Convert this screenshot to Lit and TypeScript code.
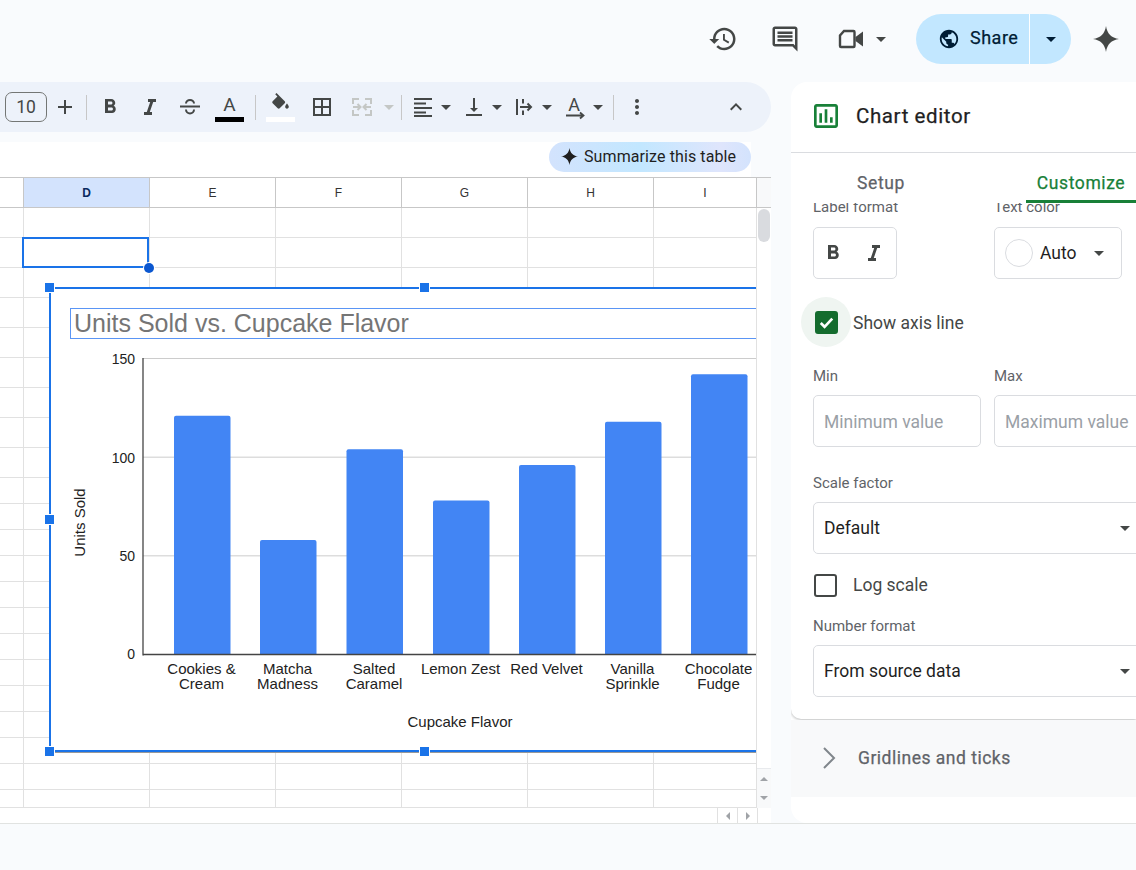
import {LitElement, css, html, svg} from 'lit';
import {customElement} from 'lit/decorators.js';

const P = {
  history: 'M13 3c-4.97 0-9 4.03-9 9H1l3.89 3.89.07.14L9 12H6c0-3.87 3.13-7 7-7s7 3.13 7 7-3.13 7-7 7c-1.93 0-3.68-.79-4.94-2.06l-1.42 1.42C8.27 19.99 10.51 21 13 21c4.97 0 9-4.03 9-9s-4.03-9-9-9zm-1 5v5l4.25 2.52.77-1.28-3.52-2.09V8z',
  comment: 'M21.99 4c0-1.1-.89-2-1.99-2H4c-1.1 0-2 .9-2 2v12c0 1.1.9 2 2 2h14l4 4-.01-18zM20 4v13.17L18.83 16H4V4h16zM6 12h12v2H6zm0-3h12v2H6zm0-3h12v2H6z',
  globe: 'M12 2C6.48 2 2 6.48 2 12s4.48 10 10 10 10-4.48 10-10S17.52 2 12 2zm-1 17.93c-3.95-.49-7-3.85-7-7.93 0-.62.08-1.21.21-1.79L9 15v1c0 1.1.9 2 2 2v1.93zm6.9-2.54c-.26-.81-1-1.39-1.9-1.39h-1v-3c0-.55-.45-1-1-1H8v-2h2c.55 0 1-.45 1-1V7h2c1.1 0 2-.9 2-2v-.41c2.93 1.19 5 4.06 5 7.41 0 2.08-.8 3.97-2.1 5.39z',
  spark: 'M12 0C13 7 17 11 24 12C17 13 13 17 12 24C11 17 7 13 0 12C7 11 11 7 12 0z',
  plus: 'M19 13h-6v6h-2v-6H5v-2h6V5h2v6h6v2z',
  bold: 'M15.6 10.79c.97-.67 1.65-1.77 1.65-2.79 0-2.26-1.75-4-4-4H7v14h7.04c2.09 0 3.71-1.7 3.71-3.79 0-1.52-.86-2.82-2.15-3.42zM10 6.5h3c.83 0 1.5.67 1.5 1.5s-.67 1.5-1.5 1.5h-3v-3zm3.5 9H10v-3h3.5c.83 0 1.5.67 1.5 1.5s-.67 1.5-1.5 1.5z',
  italic: 'M10 4v3h2.21l-3.42 10H6v3h8v-3h-2.21l3.42-10H18V4z',
  fill: 'M16.56 8.94L7.62 0 6.21 1.41l2.38 2.38-5.15 5.15c-.59.59-.59 1.54 0 2.12l5.5 5.5c.29.29.68.44 1.06.44s.77-.15 1.06-.44l5.5-5.5c.59-.58.59-1.53 0-2.12zM19 11.5s-2 2.17-2 3.5c0 1.1.9 2 2 2s2-.9 2-2c0-1.33-2-3.5-2-3.5z',
  borders: 'M3 3v18h18V3H3zm8 16H5v-6h6v6zm0-8H5V5h6v6zm8 8h-6v-6h6v6zm0-8h-6V5h6v6z',
  align: 'M3 3h18v2H3zM3 7.5h12v2H3zM3 12h18v2H3zM3 16.500h12v2H3zM3 20h18v2H3z',
  valign: 'M16 13h-3V3h-2v10H8l4 4 4-4zM4 19v2h16v-2H4z',
  more: 'M12 8c1.1 0 2-.9 2-2s-.9-2-2-2-2 .9-2 2 .9 2 2 2zm0 2c-1.1 0-2 .9-2 2s.9 2 2 2 2-.9 2-2-.9-2-2-2zm0 6c-1.1 0-2 .9-2 2s.9 2 2 2 2-.9 2-2-.9-2-2-2z',
  less: 'M12 8l-6 6 1.41 1.41L12 10.83l4.59 4.58L18 14z',
  chart: 'M19 3H5c-1.1 0-2 .9-2 2v14c0 1.1.9 2 2 2h14c1.1 0 2-.9 2-2V5c0-1.1-.9-2-2-2zm0 16H5V5h14v14zM7 10h2v7H7zm4-3h2v10h-2zm4 6h2v4h-2z',
};

const icon = (d: string, cls = '') =>
  html`<svg class="ic ${cls}" viewBox="0 0 24 24"><path d=${d}></path></svg>`;

const BARS = [
  {v: 121, x: 174, l: ['Cookies &', 'Cream']},
  {v: 58, x: 260, l: ['Matcha', 'Madness']},
  {v: 104, x: 346.500, l: ['Salted', 'Caramel']},
  {v: 78, x: 433, l: ['Lemon Zest']},
  {v: 96, x: 519, l: ['Red Velvet']},
  {v: 118, x: 605, l: ['Vanilla', 'Sprinkle']},
  {v: 142, x: 691, l: ['Chocolate', 'Fudge']},
];
const BASE = 654.5;
const UNIT = 296 / 150;

const COLS = ['D', 'E', 'F', 'G', 'H', 'I'];
// 9 tall rows, 12 short ones, then the cut-off last row
const ROWS = [...Array(9).fill(30), ...Array(12).fill(26), 18];

@customElement('app-root')
export class AppRoot extends LitElement {
  static styles = css`
    :host {
      display: block;
      width: 1136px;
      height: 870px;
      overflow: hidden;
      background: #f9fbfd;
      font-family: Roboto, "Liberation Sans", sans-serif;
      color: #1f1f1f;
    }
    .ic { display: block; width: 24px; height: 24px; fill: #444746; flex: none; }
    .caret {
      display: block;
      flex: none;
      width: 0;
      height: 0;
      border-left: 5px solid transparent;
      border-right: 5px solid transparent;
      border-top: 5px solid #444746;
    }

    /* top bar */
    .top {
      height: 82px;
      box-sizing: border-box;
      padding: 0 10px 4px 0;
      display: flex;
      align-items: center;
      justify-content: flex-end;
    }
    .tbtn { width: 40px; height: 40px; display: flex; align-items: center; justify-content: center; }
    .tbtn .ic { width: 30px; height: 30px; }
    .comment { margin-left: 22px; }
    .video { margin-left: 26px; }
    .video svg { width: 26px; height: 20px; fill: none; }
    .vcaret { width: 20px; display: flex; justify-content: center; }
    .share {
      margin-left: 25px;
      height: 50px;
      width: 155px;
      border-radius: 25px;
      overflow: hidden;
      background: #c2e7ff;
      display: flex;
      color: #001d35;
    }
    .share-main {
      width: 114px;
      display: flex;
      align-items: center;
      padding-left: 22px;
      box-sizing: border-box;
      gap: 10px;
      font-size: 18px;
      letter-spacing: .5px;
      -webkit-text-stroke: .25px #001d35;
      border-right: 1px solid #fff;
    }
    .share-main .ic { width: 22px; height: 22px; fill: #001d35; }
    .share-main span { margin-top: -3px; }
    .share-drop { flex: 1; display: flex; align-items: center; justify-content: center; }
    .share-drop .caret { border-top-color: #001d35; }
    .gem { margin-left: 15px; }
    .gem .ic { width: 26px; height: 26px; }

    .main { display: flex; height: 741px; gap: 20px; }

    /* toolbar */
    .left { width: 771px; flex: none; }
    .bar {
      height: 50px;
      background: #edf2fa;
      border-radius: 0 25px 25px 0;
      display: flex;
      align-items: center;
      padding: 0 15px 0 5px;
      box-sizing: border-box;
    }
    .size {
      width: 42px;
      height: 30px;
      box-sizing: border-box;
      border: 1px solid #747775;
      border-radius: 7px;
      font-size: 17.5px;
      color: #444746;
      display: flex;
      align-items: center;
      justify-content: center;
      flex: none;
    }
    .b { width: 40px; height: 30px; display: flex; align-items: center; justify-content: center; flex: none; }
    .b svg { overflow: visible; }
    .b36 { width: 36px; }
    .b44 { width: 44px; }
    .sep { width: 1px; height: 25px; background: #c7c7c7; flex: none; margin: 0 3px; }
    .sep.s2 { margin: 0 4px 0 5px; }
    .sep.s3 { margin: 0 5px 0 3px; }
    .sep.s4 { margin: 0 5px 0 9.5px; }
    .swatch { display: flex; flex-direction: column; align-items: center; width: 29px; height: 30px; position: relative; }
    .swatch.ink { margin-left: -1px; }
    .swatch svg { width: 29px; height: 25px; }
    .swatch i { display: block; width: 29px; height: 5px; background: #000; }
    .swatch i.white { background: #fff; }
    .dd { display: flex; align-items: center; margin-left: 5.5px; flex: none; }
    .dd.first { margin-left: 0; }
    .dd .b { width: 32px; }
    .dd > .caret { margin: 0 1px 0 2px; }
    .dd > .caret.off { margin: 0 4px; border-top-color: #c4c7c5; }
    .collapse { margin-left: auto; }

    /* sheet */
    .sheet { margin-top: 10px; height: 681px; display: flex; flex-direction: column; }
    .hint {
      width: 751px;
      height: 35px;
      flex: none;
      background: #fff;
      display: flex;
      justify-content: flex-end;
      align-items: flex-start;
    }
    .pill {
      height: 30px;
      width: 202px;
      box-sizing: border-box;
      border-radius: 15px;
      background: linear-gradient(90deg, #d3e3fd 0%, #c2e7ff 45%, #dfe5fc 85%, #d3e3fd 100%);
      display: flex;
      align-items: center;
      padding: 0 0 1px 12px;
      gap: 6px;
      font-size: 16px;
      letter-spacing: .1px;
      white-space: nowrap;
    }
    .pill .ic { width: 17px; height: 17px; fill: #1f1f1f; }
    .heads {
      height: 31px;
      flex: none;
      display: grid;
      grid-template-columns: 24px repeat(5, 126px) 103px 14px;
      border-top: 1px solid #c7c7c7;
      box-sizing: border-box;
    }
    .hd {
      background: #fff;
      border-right: 1px solid #c7c7c7;
      border-bottom: 1px solid #c7c7c7;
      display: flex;
      align-items: center;
      justify-content: center;
      font: 12px "Liberation Sans", Arial, sans-serif;
      color: #333;
    }
    .hd.sel { background: #d3e3fd; color: #0a2a5e; font-weight: 700; }
    .hd.end { background: #f8f9fa; border-right: 0; }
    .body { height: 600px; flex: none; display: flex; }
    .view { width: 757px; position: relative; background: #fff; overflow: hidden; }
    .cells { display: grid; grid-template-columns: 24px repeat(5, 126px) 103px; }
    .cell { box-sizing: border-box; border-right: 1px solid #e1e1e1; border-bottom: 1px solid #e1e1e1; }
    .vbar { width: 14px; background: #fff; position: relative; display: flex; flex-direction: column; }
    .thumb { position: absolute; left: 1px; top: 1px; width: 12px; height: 33px; border-radius: 6px; background: #d9dbdf; }
    .arrows {
      margin-top: auto;
      height: 40px;
      background: #f8f9fa;
      border-top: 1px solid #e8eaed;
      box-sizing: border-box;
      display: flex;
      flex-direction: column;
      align-items: center;
      justify-content: space-around;
    }
    .up, .down { width: 0; height: 0; border-left: 4px solid transparent; border-right: 4px solid transparent; }
    .up { border-bottom: 4px solid #a0a3a7; }
    .down { border-top: 4px solid #a0a3a7; }
    .hbar { height: 15px; flex: none; width: 771px; background: #fff; display: flex; justify-content: flex-end; }
    .hb { width: 20px; border-left: 1px solid #e1e1e1; display: flex; align-items: center; justify-content: center; box-sizing: border-box; }
    .hb:last-child { width: 14px; }
    .lt, .rt { width: 0; height: 0; border-top: 4px solid transparent; border-bottom: 4px solid transparent; }
    .lt { border-right: 4px solid #a0a3a7; }
    .rt { border-left: 4px solid #a0a3a7; }

    /* selected cell and chart, both lying over the grid */
    .cursor {
      position: absolute;
      left: 22px;
      top: 29px;
      width: 127px;
      height: 31px;
      box-sizing: border-box;
      border: 2px solid #1a73e8;
    }
    .cursor::after {
      content: "";
      position: absolute;
      right: -7px;
      bottom: -7px;
      width: 10px;
      height: 10px;
      border-radius: 50%;
      background: #0b57d0;
      box-shadow: 0 0 0 1px #fff;
    }
    .clip { position: absolute; left: 0; top: 0; width: 756px; height: 600px; overflow: hidden; }
    .chart {
      position: absolute;
      left: 49px;
      top: 79px;
      width: 750px;
      height: 465px;
      box-sizing: border-box;
      background: #fff;
      border: 2px solid #1a73e8;
      box-shadow: 0 1px 0 #999;
    }
    .chart svg { position: absolute; left: -2px; top: -2px; }
    .chart text { font-family: "Liberation Sans", Arial, sans-serif; font-size: 15px; fill: #222; }
    .chart text.tick-label { font-size: 14px; }
    .title {
      position: absolute;
      left: 19px;
      top: 19px;
      width: 740px;
      height: 31px;
      box-sizing: border-box;
      border: 1px solid #5a95f5;
      padding-left: 3px;
      font: 25px/28px "Liberation Sans", Arial, sans-serif;
      color: #757575;
      white-space: nowrap;
    }
    .h {
      position: absolute;
      width: 9px;
      height: 9px;
      background: #1a73e8;
      box-shadow: 0 0 0 1px #fff;
    }
    .h.tl { left: -6px; top: -6px; }
    .h.tm { left: 369px; top: -6px; }
    .h.ml { left: -6px; top: 226px; }
    .h.bl { left: -6px; top: 458px; }
    .h.bm { left: 369px; top: 458px; }

    /* chart editor */
    .panel {
      width: 345px;
      height: 741px;
      background: #fff;
      border-radius: 16px 0 0 16px;
      overflow: hidden;
      flex: none;
      display: flex;
      flex-direction: column;
    }
    .phead {
      height: 71px;
      flex: none;
      box-sizing: border-box;
      border-bottom: 1px solid #dadce0;
      display: flex;
      align-items: center;
      padding: 0 0 2px 19px;
      gap: 14px;
      font-size: 20.5px;
      letter-spacing: .6px;
      -webkit-text-stroke: .25px #1f1f1f;
    }
    .phead .ic { width: 32px; height: 32px; fill: #188038; }
    .tabs { height: 50px; flex: none; display: flex; padding-left: 35px; gap: 90px; }
    .tab {
      width: 110px;
      box-sizing: border-box;
      display: flex;
      align-items: center;
      justify-content: center;
      padding-top: 9px;
      font-size: 17.5px;
      letter-spacing: .6px;
      color: #5f6368;
      -webkit-text-stroke: .25px #5f6368;
    }
    .tab.on { color: #188038; -webkit-text-stroke-color: #188038; border-bottom: 3px solid #188038; padding-top: 12px; }
    .scroll { height: 620px; flex: none; overflow: hidden; }
    .card {
      margin-top: -6px;
      padding: 0 0 22px 22px;
      border-radius: 0 0 0 10px;
      box-shadow: 0 1px 3px rgba(60, 64, 67, .35);
      background: #fff;
      width: 345px;
      box-sizing: border-box;
      overflow: hidden;
    }
    .two { display: grid; grid-template-columns: 168px 168px; column-gap: 13px; }
    .lab { font-size: 15px; line-height: 20px; color: #5f6368; }
    .box {
      height: 52px;
      margin-top: 9px;
      box-sizing: border-box;
      border: 1px solid #dadce0;
      border-radius: 5px;
      display: flex;
      align-items: center;
      font-size: 17.5px;
      padding: 0 10px;
    }
    .first-row .box { margin-top: 10px; }
    .fmt { width: 84px; padding: 0 0 0 7px; gap: 17px; }
    .color { width: 128px; }
    .dot { width: 28px; height: 28px; box-sizing: border-box; border: 1px solid #dadce0; border-radius: 50%; margin-right: 7px; flex: none; }
    .color .caret { margin-left: 17px; }
    .ph { color: #9aa0a6; padding-top: 1px; }
    .pick { width: 349px; }
    .pick .caret { margin-left: auto; margin-right: 21px; }
    .chk { display: flex; align-items: center; font-size: 17.5px; color: #444746; }
    .chk.axis { margin-top: 18px; height: 50px; gap: 2px; }
    .chk.axis span { margin-top: 2px; }
    .chk.log { margin-top: 19px; height: 24px; gap: 16px; }
    .halo {
      width: 50px;
      height: 50px;
      margin-left: -12px;
      border-radius: 50%;
      background: #eff5f1;
      display: flex;
      align-items: center;
      justify-content: center;
    }
    .tick {
      width: 23px;
      height: 23px;
      box-sizing: border-box;
      border-radius: 3px;
      position: relative;
      border: 2px solid #444746;
    }
    .log .tick { margin-left: 1px; }
    .tick.on { background: #146c2e; border-color: #146c2e; }
    .tick svg { display: block; position: absolute; left: -2px; top: -2px; width: 23px; height: 23px; fill: none; stroke: #fff; stroke-width: 2.8; }
    .mt-min { margin-top: 19px; }
    .mt-scale { margin-top: 26px; }
    .mt-num { margin-top: 19px; }
    .acc {
      margin-top: 1px;
      height: 77px;
      box-sizing: border-box;
      background: #f8f9fa;
      display: flex;
      align-items: center;
      padding: 0 0 2px 31px;
      gap: 22px;
      font-size: 17.5px;
      letter-spacing: .5px;
      color: #5f6368;
      -webkit-text-stroke: .25px #5f6368;
    }
    .acc svg { width: 14px; height: 22px; fill: none; stroke: #80868b; stroke-width: 2; }

    .foot { height: 47px; box-sizing: border-box; border-top: 1px solid #e1e3e1; }
  `;

  private renderTop() {
    return html`<div class="top">
      <div class="tbtn">${icon(P.history)}</div>
      <div class="tbtn comment">${icon(P.comment)}</div>
      <div class="tbtn video">
        <svg viewBox="0 0 26 20">
          <path d="M6 2h9.500a1 1 0 0 1 1 1v14a1 1 0 0 1-1 1H3a1 1 0 0 1-1-1V6.500z" stroke="#444746" stroke-width="2.400"></path>
          <path d="M17.500 8l7.500-5.500v15L17.500 12z" fill="#444746"></path>
        </svg>
      </div>
      <div class="vcaret"><span class="caret"></span></div>
      <div class="share">
        <div class="share-main">${icon(P.globe)}<span>Share</span></div>
        <div class="share-drop"><span class="caret"></span></div>
      </div>
      <div class="tbtn gem">${icon(P.spark)}</div>
    </div>`;
  }

  private renderBar() {
    return html`<div class="bar">
      <div class="size">10</div>
      <div class="b b36">${icon(P.plus)}</div>
      <div class="sep"></div>
      <div class="b">${icon(P.bold)}</div>
      <div class="b">${icon(P.italic)}</div>
      <div class="b">
        <svg class="ic" viewBox="0 0 24 24" style="fill:none;stroke:#444746;stroke-width:2">
          <path d="M2 11.500h20M8 8.500a4 3.500 0 0 1 8 0M8 14.500a4 4 0 0 0 8 0"></path>
        </svg>
      </div>
      <div class="b">
        <div class="swatch ink">
          <svg viewBox="0 0 29 25"><text x="14.500" y="19" text-anchor="middle" font-family="Roboto" font-size="19" fill="#444746">A</text></svg>
          <i></i>
        </div>
      </div>
      <div class="sep s2"></div>
      <div class="b">
        <div class="swatch">
          <svg viewBox="0 0 29 25"><g transform="translate(3.500 1) scale(.92)"><path fill="#444746" d=${P.fill}></path></g></svg>
          <i class="white"></i>
        </div>
      </div>
      <div class="b b44">${icon(P.borders)}</div>
      <div class="b b36">
        <svg class="ic" viewBox="0 0 24 24" style="fill:none;stroke:#c4c7c5;stroke-width:2">
          <path d="M3 9V4h6M15 4h6v5M3 15v5h6M15 20h6v-5M3 12h7M7.500 9L10.500 12l-3 3M21 12h-7M16.500 9l-3 3 3 3"></path>
        </svg>
      </div>
      <div class="dd first"><span class="caret off"></span></div>
      <div class="sep s3"></div>
      <div class="dd first">
        <div class="b">${icon(P.align)}</div><span class="caret"></span>
      </div>
      <div class="dd">
        <div class="b">${icon(P.valign)}</div><span class="caret"></span>
      </div>
      <div class="dd">
        <div class="b">
          <svg class="ic" viewBox="0 0 24 24" style="fill:none;stroke:#444746;stroke-width:2">
            <path d="M5 4v16M11 4v4.500M11 15.500V20M8 12h11M15.500 8.500L19 12l-3.500 3.500"></path>
          </svg>
        </div><span class="caret"></span>
      </div>
      <div class="dd">
        <div class="b">
          <svg class="ic" viewBox="0 0 24 24" style="fill:none">
            <text x="11" y="16" text-anchor="middle" font-family="Roboto" font-size="18" fill="#444746">A</text>
            <path d="M3 20.500h17M17 17.500l3.500 3-3.500 3" stroke="#444746" stroke-width="1.800"></path>
          </svg>
        </div><span class="caret"></span>
      </div>
      <div class="sep s4"></div>
      <div class="b b36">${icon(P.more)}</div>
      <div class="b collapse">${icon(P.less)}</div>
    </div>`;
  }

  private renderChart() {
    const ticks = [150, 100, 50, 0];
    return html`<div class="chart">
      <svg width="750" height="465" viewBox="49 287 750 465">
        ${ticks.slice(0, 3).map(t => svg`<line x1="143" x2="756" y1=${BASE - t * UNIT} y2=${BASE - t * UNIT} stroke="#ccc"></line>`)}
        ${BARS.map(b => {
          const top = BASE - b.v * UNIT;
          return svg`<path fill="#4285f4" d="M${b.x} ${BASE}V${top + 2}q0-2 2-2h52.500q2 0 2 2V${BASE}z"></path>`;
        })}
        <line x1="143" x2="143" y1="358" y2=${BASE + 1} stroke="#444" stroke-width="1.300"></line>
        <line x1="143" x2="756" y1=${BASE} y2=${BASE} stroke="#444" stroke-width="1.300"></line>
        ${ticks.map((t, i) => svg`<text class="tick-label" x="135" y=${[364, 463, 561, 659][i]} text-anchor="end">${t}</text>`)}
        ${BARS.map(b => b.l.map((line, i) => svg`<text x=${b.x + 27.5} y=${674 + i * 15} text-anchor="middle">${line}</text>`))}
        <text x="460" y="727" text-anchor="middle">Cupcake Flavor</text>
        <text transform="translate(85 522.500) rotate(-90)" text-anchor="middle">Units Sold</text>
      </svg>
      <div class="title">Units Sold vs. Cupcake Flavor</div>
      <span class="h tl"></span><span class="h tm"></span><span class="h ml"></span>
      <span class="h bl"></span><span class="h bm"></span>
    </div>`;
  }

  private renderSheet() {
    return html`<div class="sheet">
      <div class="hint"><div class="pill">${icon(P.spark)}Summarize this table</div></div>
      <div class="heads">
        <div class="hd"></div>
        ${COLS.map((c, i) => html`<div class="hd ${i === 0 ? 'sel' : ''}">${c}</div>`)}
        <div class="hd end"></div>
      </div>
      <div class="body">
        <div class="view">
          <div class="cells">
            ${ROWS.map(h => [0, 1, 2, 3, 4, 5, 6].map(() => html`<div class="cell" style="height:${h}px"></div>`))}
          </div>
          <div class="cursor"></div>
          <div class="clip">${this.renderChart()}</div>
        </div>
        <div class="vbar">
          <div class="thumb"></div>
          <div class="arrows"><span class="up"></span><span class="down"></span></div>
        </div>
      </div>
      <div class="hbar">
        <div class="hb"><span class="lt"></span></div>
        <div class="hb"><span class="rt"></span></div>
        <div class="hb"></div>
      </div>
    </div>`;
  }

  private renderPanel() {
    return html`<div class="panel">
      <div class="phead">${icon(P.chart)}Chart editor</div>
      <div class="tabs">
        <div class="tab">Setup</div>
        <div class="tab on">Customize</div>
      </div>
      <div class="scroll">
        <div class="card">
          <div class="two first-row">
            <div>
              <div class="lab">Label format</div>
              <div class="box fmt">${icon(P.bold)}${icon(P.italic)}</div>
            </div>
            <div>
              <div class="lab">Text color</div>
              <div class="box color"><span class="dot"></span>Auto<span class="caret"></span></div>
            </div>
          </div>
          <div class="chk axis">
            <div class="halo">
              <div class="tick on"><svg viewBox="0 0 24 24"><path d="M6 12.500l4 4 8-8.500"></path></svg></div>
            </div>
            <span>Show axis line</span>
          </div>
          <div class="two mt-min">
            <div><div class="lab">Min</div><div class="box ph">Minimum value</div></div>
            <div><div class="lab">Max</div><div class="box ph">Maximum value</div></div>
          </div>
          <div class="lab mt-scale">Scale factor</div>
          <div class="box pick">Default<span class="caret"></span></div>
          <div class="chk log"><div class="tick"></div>Log scale</div>
          <div class="lab mt-num">Number format</div>
          <div class="box pick">From source data<span class="caret"></span></div>
        </div>
        <div class="acc">
          <svg viewBox="0 0 14 22"><path d="M2 1l10 10L2 21"></path></svg>
          Gridlines and ticks
        </div>
      </div>
    </div>`;
  }

  render() {
    return html`
      ${this.renderTop()}
      <div class="main">
        <div class="left">${this.renderBar()}${this.renderSheet()}</div>
        ${this.renderPanel()}
      </div>
      <div class="foot"></div>
    `;
  }
}

declare global {
  interface HTMLElementTagNameMap {
    'app-root': AppRoot;
  }
}
